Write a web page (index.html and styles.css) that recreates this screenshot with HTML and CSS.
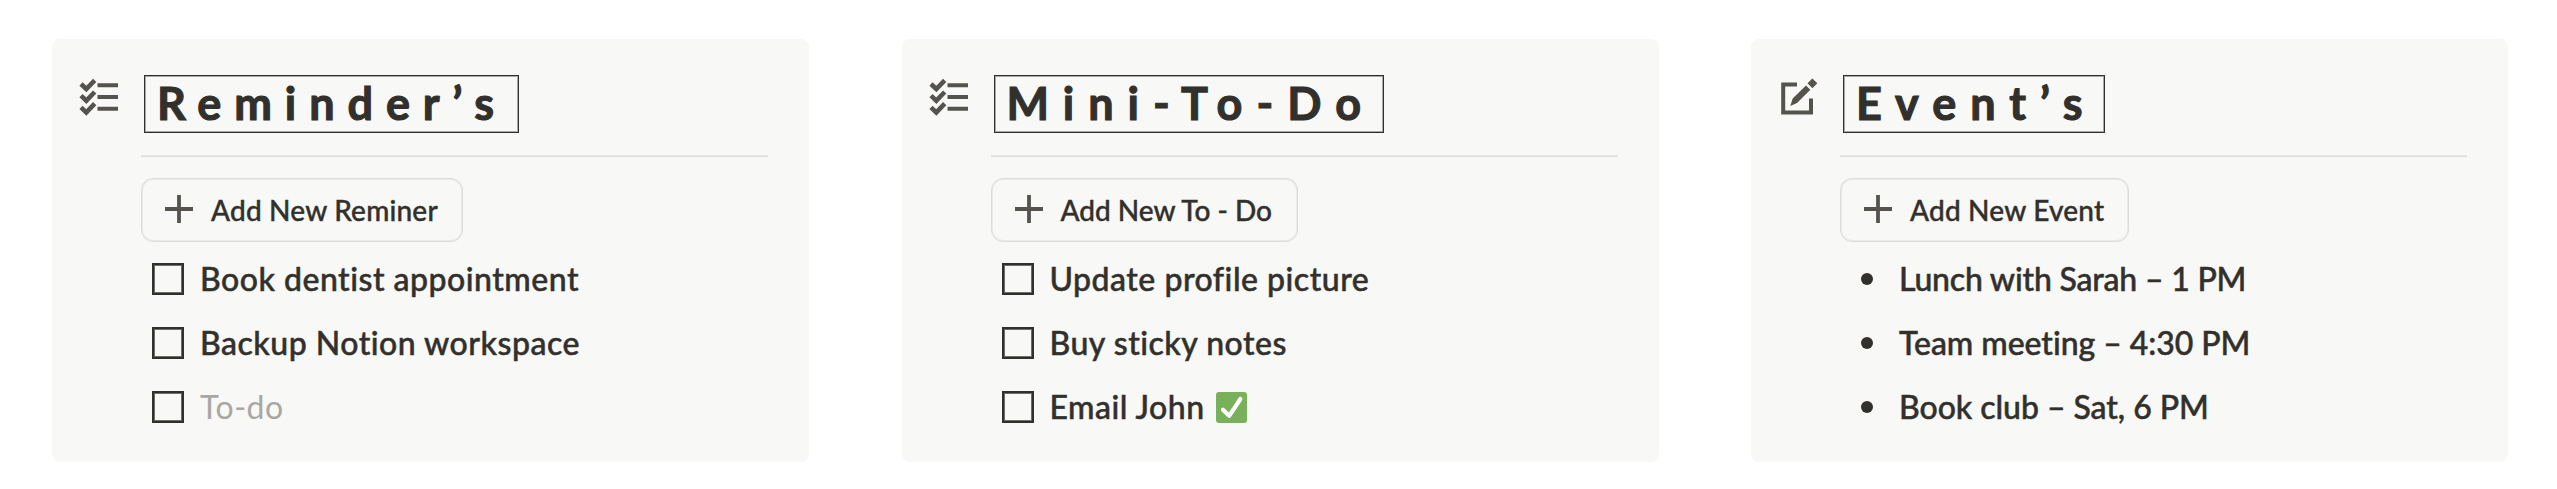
FILE: index.html
```html
<!DOCTYPE html>
<html lang="en">
<head>
  <meta charset="UTF-8" />
  <meta name="viewport" content="width=device-width, initial-scale=1.0"/>
  <title>Reminders</title>
  <link rel="stylesheet" href="styles.css">
</head>
<body>
  <div class="board">
    <section class="card reminders">
      <svg class="card-icon" viewBox="0 0 50 50">
        <path class="checks" d="M7 14l5.3 5 8.4-8.7M7 25.7l5.3 5 8.4-8.7M7 37.4l5.3 5 8.4-8.7"/>
        <path d="M23.5 15.3H44M23.5 27H44M23.5 38.7H44"/>
      </svg>
      <div class="card-body">
        <h2>Reminder’s</h2>
        <hr>
        <button class="add-btn">
          <svg viewBox="0 0 28 28"><path d="M14 0v28M0 14h28"/></svg>
          <span>Add New Reminer</span>
        </button>
        <ul>
          <li><span class="box"></span><span>Book dentist appointment</span></li>
          <li><span class="box"></span><span>Backup Notion workspace</span></li>
          <li><span class="box"></span><span class="placeholder">To-do</span></li>
        </ul>
      </div>
    </section>

    <section class="card todos">
      <svg class="card-icon" viewBox="0 0 50 50">
        <path class="checks" d="M7 14l5.3 5 8.4-8.7M7 25.7l5.3 5 8.4-8.7M7 37.4l5.3 5 8.4-8.7"/>
        <path d="M23.5 15.3H44M23.5 27H44M23.5 38.7H44"/>
      </svg>
      <div class="card-body">
        <h2>Mini-To-Do</h2>
        <hr>
        <button class="add-btn">
          <svg viewBox="0 0 28 28"><path d="M14 0v28M0 14h28"/></svg>
          <span>Add New To - Do</span>
        </button>
        <ul>
          <li><span class="box"></span><span>Update profile picture</span></li>
          <li><span class="box"></span><span>Buy sticky notes</span></li>
          <li>
            <span class="box"></span><span>Email John</span>
            <svg class="done" viewBox="0 0 31 31"><rect width="31" height="31" rx="3"/><path d="M7 17.8l6.2 6L24.4 7"/></svg>
          </li>
        </ul>
      </div>
    </section>

    <section class="card events">
      <svg class="card-icon" viewBox="0 0 50 50">
        <path d="M22 14.5H8.2v28H36v-14"/>
        <path class="pen" d="M15.3 36l2.4-7.4L31 15.5l4.3 4.2L22 33zM37.4 8.4l4.9 4.9-4.9 4.9-4.9-4.9z"/>
      </svg>
      <div class="card-body">
        <h2>Event’s</h2>
        <hr>
        <button class="add-btn">
          <svg viewBox="0 0 28 28"><path d="M14 0v28M0 14h28"/></svg>
          <span>Add New Event</span>
        </button>
        <ul>
          <li><span class="dot"></span><span class="lunch">Lunch with Sarah – 1 PM</span></li>
          <li><span class="dot"></span><span>Team meeting – 4:30 PM</span></li>
          <li><span class="dot"></span><span>Book club – Sat, 6 PM</span></li>
        </ul>
      </div>
    </section>
  </div>
</body>
</html>
```
FILE: styles.css
```css
* {
  box-sizing: border-box;
}

body {
  font-family: Lato, "Noto Sans", sans-serif;
  margin: 0;
  background: #ffffff;
  color: #32302c;
  font-variant-ligatures: none;
}

.board {
  display: grid;
  grid-template-columns: repeat(3, 1fr);
  gap: 92.5px;
  padding: 39px 49px 0 52px;
}

.card {
  display: flex;
  height: 423px;
  padding: 31px 41px 0 22px;
  background: #f8f8f6;
  border-radius: 8px;
}

.card-icon {
  flex: none;
  width: 50px;
  height: 50px;
  margin-right: 17px;
  fill: none;
  stroke: #55534e;
  stroke-width: 4;
}

.card-icon .checks {
  stroke-width: 4.6;
}

.card-icon .pen {
  fill: #55534e;
  stroke: none;
}

.events .card-icon {
  margin: 0 15px 0 2px;
}

.card-body {
  flex: 1;
  padding-top: 5px;
}

h2 {
  width: fit-content;
  height: 58px;
  margin: 0 0 22px 3px;
  padding: 0 11px 0 12px;
  border: 1px solid #32302c;
  box-shadow: inset 0 0 0 1px rgba(50, 48, 44, 0.4);
  font-size: 45px;
  font-weight: 700;
  line-height: 55px;
  letter-spacing: 12.9px;
  -webkit-text-stroke: 1.1px #32302c;
}

hr {
  height: 2px;
  margin: 0 0 21px;
  border: none;
  border-top: 1px solid #e7e7e5;
  background: #dcdcda;
}

.add-btn {
  display: flex;
  align-items: center;
  height: 64px;
  padding: 1px 24px 0 22px;
  background: none;
  border: 1px solid #dcdcda;
  border-radius: 12px;
  box-shadow: inset 0 0 0 1px rgba(220, 220, 218, 0.5);
  color: inherit;
  font: 500 28px/1.2 Lato, "Noto Sans", sans-serif;
  letter-spacing: 0.2px;
  -webkit-text-stroke: 0.4px #32302c;
}

.add-btn svg {
  width: 28px;
  height: 28px;
  margin: 0 18px 4px 1px;
  stroke: #55534e;
  stroke-width: 3.8;
}

ul {
  margin: 5px 0 0;
  padding: 0;
}

li {
  display: flex;
  align-items: center;
  height: 64px;
  list-style: none;
  font-size: 32px;
  font-weight: 500;
  line-height: 38px;
  letter-spacing: 0.5px;
  white-space: nowrap;
  -webkit-text-stroke: 0.5px #32302c;
}

.box {
  flex: none;
  width: 32px;
  height: 32px;
  margin: 0 16px 0 11px;
  border: 2px solid #32302c;
  box-shadow: inset 0 0 0 1px rgba(50, 48, 44, 0.7);
}

.placeholder {
  color: #a8a7a4;
  font-weight: 400;
  -webkit-text-stroke: 0;
}

.done {
  width: 31px;
  height: 31px;
  margin-left: 11px;
}

.done rect {
  fill: #78b159;
}

.done path {
  fill: none;
  stroke: #ffffff;
  stroke-width: 4.2;
  stroke-linecap: round;
  stroke-linejoin: round;
}

.dot {
  flex: none;
  width: 12px;
  height: 12px;
  margin: 0 26px 0 21px;
  border-radius: 50%;
  background: #32302c;
}

.todos h2 {
  padding-right: 8px;
  letter-spacing: 14px;
}

.todos .add-btn {
  padding-right: 25px;
  letter-spacing: 0;
}

.events h2 {
  padding-right: 7px;
  letter-spacing: 14px;
}

.events li {
  letter-spacing: -0.05px;
}

.events .lunch {
  letter-spacing: -0.2px;
}
```
